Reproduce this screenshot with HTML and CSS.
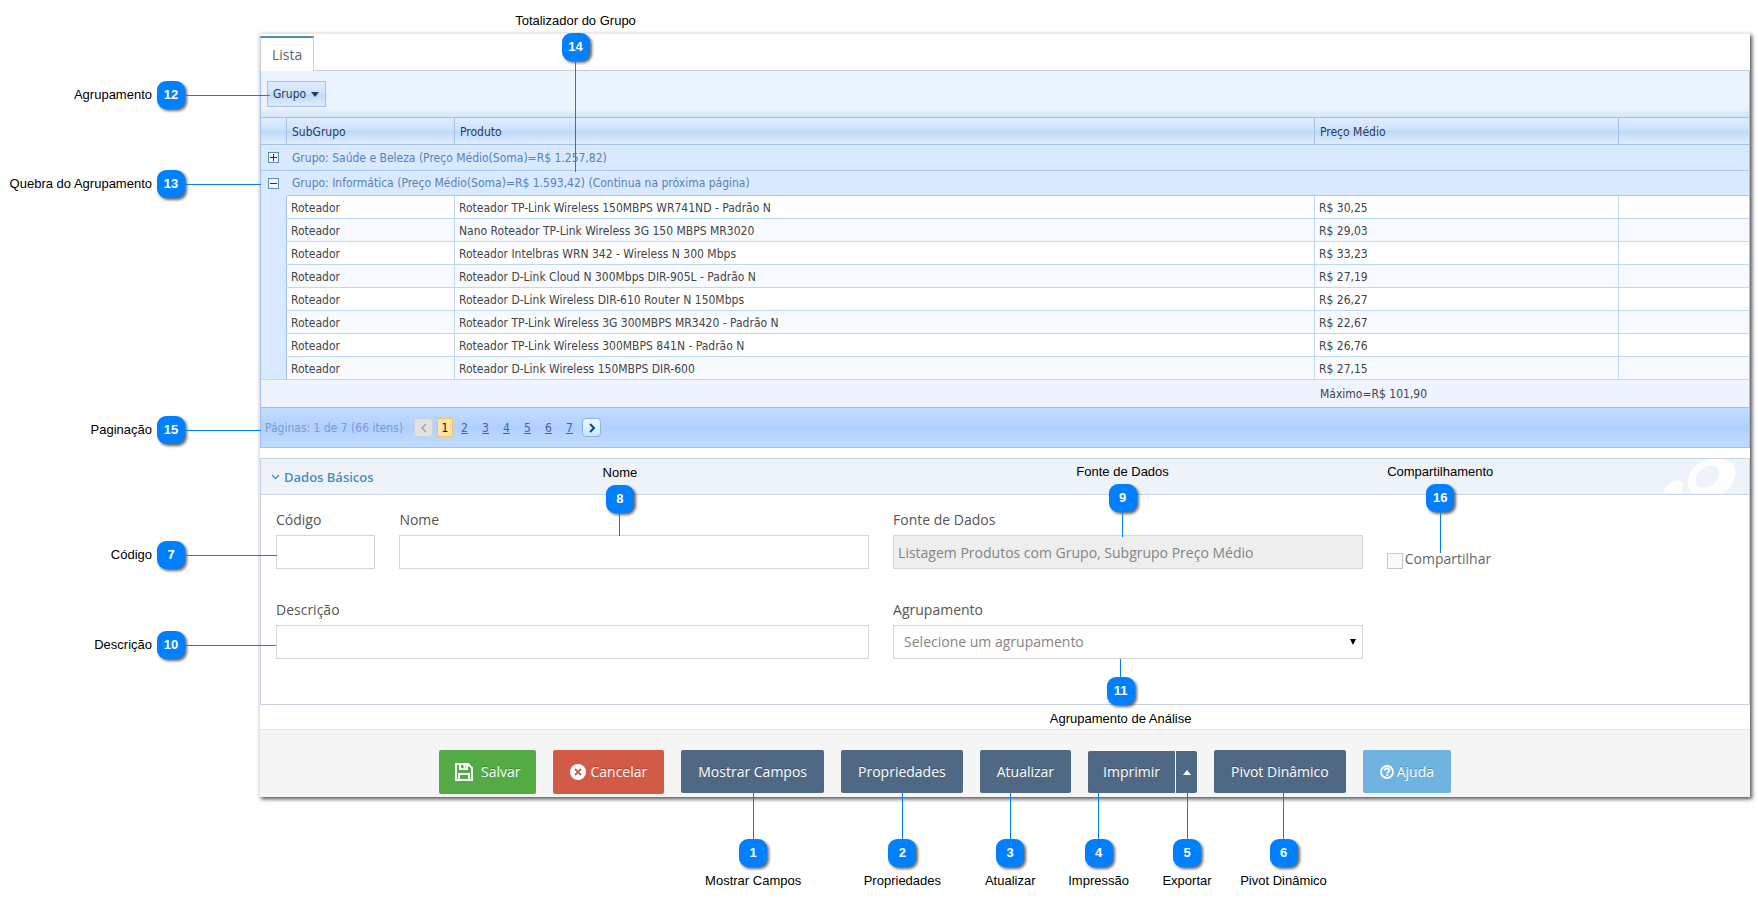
FILE: index.html
```html
<!DOCTYPE html>
<html lang="pt-BR">
<head>
<meta charset="utf-8">
<title>Análise de Dados</title>
<meta name="viewport" content="width=device-width, initial-scale=1">
<link rel="stylesheet" href="styles.css">
</head>
<body>
<main class="window">
  <div class="tabs">
    <button class="tab" type="button">Lista</button>
    <div class="callout callout-above c14"><span class="callout-label">Totalizador do Grupo</span><b class="badge">14</b><i class="lead"></i></div>
  </div>

  <section class="grid">
    <div class="group-panel">
      <div class="spot">
        <button class="group-button" type="button">Grupo
          <svg width="8" height="5" viewBox="0 0 8 5" aria-hidden="true"><path d="M0 0h8L4 5z" fill="#283b56"/></svg>
        </button>
        <div class="callout callout-left c12"><span class="callout-label">Agrupamento</span><b class="badge">12</b><i class="lead"></i></div>
      </div>
    </div>

    <table class="data">
      <colgroup><col class="col-indent"><col class="col-sub"><col><col class="col-price"><col class="col-rest"></colgroup>
      <thead>
        <tr><th></th><th>SubGrupo</th><th>Produto</th><th>Preço Médio</th><th></th></tr>
      </thead>
      <tbody>
        <tr class="group">
          <td><button class="toggle" type="button" aria-label="Expandir"><svg width="7" height="7" viewBox="0 0 7 7"><path d="M0 3h7v1H0zM3 0h1v7H3z" fill="#1f3350"/></svg></button></td>
          <td colspan="4">Grupo: Saúde e Beleza (Preço Médio(Soma)=R$ 1.257,82)</td>
        </tr>
        <tr class="group">
          <td class="spot"><button class="toggle" type="button" aria-label="Recolher"><svg width="7" height="7" viewBox="0 0 7 7"><path d="M0 3h7v1H0z" fill="#1f3350"/></svg></button>
            <div class="callout callout-left c13"><span class="callout-label">Quebra do Agrupamento</span><b class="badge">13</b><i class="lead"></i></div></td>
          <td colspan="4">Grupo: Informática (Preço Médio(Soma)=R$ 1.593,42) (Continua na próxima página)</td>
        </tr>
        <tr class="item"><td></td><td>Roteador</td><td>Roteador TP-Link Wireless 150MBPS WR741ND - Padrão N</td><td>R$ 30,25</td><td></td></tr>
        <tr class="item alt"><td></td><td>Roteador</td><td>Nano Roteador TP-Link Wireless 3G 150 MBPS MR3020</td><td>R$ 29,03</td><td></td></tr>
        <tr class="item"><td></td><td>Roteador</td><td>Roteador Intelbras WRN 342 - Wireless N 300 Mbps</td><td>R$ 33,23</td><td></td></tr>
        <tr class="item alt"><td></td><td>Roteador</td><td>Roteador D-Link Cloud N 300Mbps DIR-905L - Padrão N</td><td>R$ 27,19</td><td></td></tr>
        <tr class="item"><td></td><td>Roteador</td><td>Roteador D-Link Wireless DIR-610 Router N 150Mbps</td><td>R$ 26,27</td><td></td></tr>
        <tr class="item alt"><td></td><td>Roteador</td><td>Roteador TP-Link Wireless 3G 300MBPS MR3420 - Padrão N</td><td>R$ 22,67</td><td></td></tr>
        <tr class="item"><td></td><td>Roteador</td><td>Roteador TP-Link Wireless 300MBPS 841N - Padrão N</td><td>R$ 26,76</td><td></td></tr>
        <tr class="item alt"><td></td><td>Roteador</td><td>Roteador D-Link Wireless 150MBPS DIR-600</td><td>R$ 27,15</td><td></td></tr>
      </tbody>
      <tfoot>
        <tr><td colspan="3"></td><td>Máximo=R$ 101,90</td><td></td></tr>
      </tfoot>
    </table>

    <nav class="pager spot" aria-label="Paginação">
      <span class="pager-summary">Páginas: 1 de 7 (66 itens)</span>
      <button class="pager-step" type="button" disabled aria-label="Anterior"><svg width="6" height="10" viewBox="0 0 6 10"><path d="M5 1L1 5l4 4" fill="none" stroke="#a5a5a5" stroke-width="1.5"/></svg></button>
      <span class="pager-current">1</span>
      <a href="#p2">2</a><a href="#p3">3</a><a href="#p4">4</a><a href="#p5">5</a><a href="#p6">6</a><a href="#p7">7</a>
      <button class="pager-step" type="button" aria-label="Próxima"><svg width="6" height="10" viewBox="0 0 6 10"><path d="M1 1l4 4-4 4" fill="none" stroke="#0d4f7c" stroke-width="2"/></svg></button>
      <div class="callout callout-left c15"><span class="callout-label">Paginação</span><b class="badge">15</b><i class="lead"></i></div>
    </nav>
  </section>

  <section class="panel">
    <header class="panel-head">
      <svg width="9" height="6" viewBox="0 0 9 6" aria-hidden="true"><path d="M1 1l3.500 3.500L8 1" fill="none" stroke="#478fb8" stroke-width="1.3"/></svg>
      <h2>Dados Básicos</h2>
      <svg class="panel-art" width="76" height="35" viewBox="0 0 76 34" aria-hidden="true">
        <path d="M0 34C2 27 8 21 15 21c5 0 6 4 5 8l-2 5z" fill="#fff"/>
        <path fill-rule="evenodd" d="M29 34C22 26 24 14 33 6 41-1 53-3 62 0c10 3 12 12 9 20-2 6-6 11-12 14zM40 28c8 1 15-6 16-13 1-5-2-9-8-9-7 0-13 6-15 12-1 6 1 10 7 10z" fill="#fff"/>
      </svg>
    </header>
    <form class="fields">
      <div class="field w1">
        <label for="codigo">Código</label>
        <div class="spot"><input id="codigo" type="text">
          <div class="callout callout-left c7"><span class="callout-label">Código</span><b class="badge">7</b><i class="lead"></i></div></div>
      </div>
      <div class="field w4">
        <label for="nome">Nome</label>
        <div class="spot"><input id="nome" type="text">
          <div class="callout callout-above c8"><span class="callout-label">Nome</span><b class="badge">8</b><i class="lead"></i></div></div>
      </div>
      <div class="field w4">
        <label for="fonte">Fonte de Dados</label>
        <div class="spot"><input id="fonte" type="text" disabled value="Listagem Produtos com Grupo, Subgrupo Preço Médio">
          <div class="callout callout-above c9"><span class="callout-label">Fonte de Dados</span><b class="badge">9</b><i class="lead"></i></div></div>
      </div>
      <div class="check spot w3">
        <input id="compartilhar" type="checkbox"><label for="compartilhar">Compartilhar</label>
        <div class="callout callout-above c16"><span class="callout-label">Compartilhamento</span><b class="badge">16</b><i class="lead"></i></div>
      </div>
      <div class="field w5">
        <label for="descricao">Descrição</label>
        <div class="spot"><input id="descricao" type="text">
          <div class="callout callout-left c10"><span class="callout-label">Descrição</span><b class="badge">10</b><i class="lead"></i></div></div>
      </div>
      <div class="field w4">
        <label for="agrupamento">Agrupamento</label>
        <div class="spot"><select id="agrupamento"><option>Selecione um agrupamento</option></select>
          <svg class="select-arrow" width="6" height="6" viewBox="0 0 6 6" aria-hidden="true"><path d="M0 0h6L3 6z"/></svg>
          <div class="callout callout-below c11"><i class="lead"></i><b class="badge">11</b><span class="callout-label">Agrupamento de Análise</span></div></div>
      </div>
    </form>
  </section>

  <footer class="actions">
    <button class="btn btn-save" type="button">
      <svg width="18" height="18" viewBox="0 0 18 18" aria-hidden="true"><path fill="none" stroke="#fff" stroke-width="2" d="M1 1h12l4 4v12H1zM4 17v-6h10v6M5 1v5h7V1"/><path fill="#fff" d="M8.500 1.500h2v4h-2z"/></svg>
      Salvar</button>
    <button class="btn btn-cancel" type="button">
      <svg width="16" height="16" viewBox="0 0 16 16" aria-hidden="true"><circle cx="8" cy="8" r="8" fill="#fff"/><path d="M5 5l6 6M11 5l-6 6" stroke="#d15b47" stroke-width="1.800"/></svg>
      Cancelar</button>
    <div class="spot">
      <button class="btn" type="button">Mostrar Campos</button>
      <div class="callout callout-below c1"><i class="lead"></i><b class="badge">1</b><span class="callout-label">Mostrar Campos</span></div>
    </div>
    <div class="spot">
      <button class="btn" type="button">Propriedades</button>
      <div class="callout callout-below c2"><i class="lead"></i><b class="badge">2</b><span class="callout-label">Propriedades</span></div>
    </div>
    <div class="spot">
      <button class="btn" type="button">Atualizar</button>
      <div class="callout callout-below c3"><i class="lead"></i><b class="badge">3</b><span class="callout-label">Atualizar</span></div>
    </div>
    <div class="split">
      <div class="spot">
        <button class="btn btn-main" type="button">Imprimir</button>
        <div class="callout callout-below c4"><i class="lead"></i><b class="badge">4</b><span class="callout-label">Impressão</span></div>
      </div>
      <div class="spot">
        <button class="btn btn-more" type="button" aria-label="Exportar"><svg width="8" height="5" viewBox="0 0 8 5"><path d="M0 5h8L4 0z" fill="#fff"/></svg></button>
        <div class="callout callout-below c5"><i class="lead"></i><b class="badge">5</b><span class="callout-label">Exportar</span></div>
      </div>
    </div>
    <div class="spot">
      <button class="btn" type="button">Pivot Dinâmico</button>
      <div class="callout callout-below c6"><i class="lead"></i><b class="badge">6</b><span class="callout-label">Pivot Dinâmico</span></div>
    </div>
    <button class="btn btn-help" type="button">
      <svg width="14" height="14" viewBox="0 0 14 14" aria-hidden="true"><circle cx="7" cy="7" r="6" fill="none" stroke="#fff" stroke-width="1.800"/><path d="M4.800 5.500c0-1.300 1-2 2.200-2s2.300.7 2.300 1.900c0 1.500-2 1.500-2 3" fill="none" stroke="#fff" stroke-width="1.800"/><path d="M6.300 9.200h2v1.700h-2z" fill="#fff"/></svg>
      Ajuda</button>
  </footer>
</main>
</body>
</html>
```
FILE: styles.css
```css
*, *::before, *::after { box-sizing: border-box; }

body {
  min-height: 100vh;
  margin: 0;
  padding: 33px 8px 100px 259px;
  background: #fff;
  color: #666;
  font: 14px/20px "Open Sans", sans-serif;
}

button, input, select { font: inherit; color: inherit; margin: 0; }

.spot { position: relative; }

.window {
  border-left: 1px solid #e4e4e4;
  border-top: 1px solid #e9e9e9;
  background: #fff;
  box-shadow: 2px 2px 4px rgba(0, 0, 0, .7);
}

/* Tabs */
.tabs {
  position: relative;
  display: flex;
  height: 37px;
  padding-top: 2px;
  border-bottom: 1px solid #c5d0dc;
}
.tab {
  height: 35px;
  padding: 0 11px;
  border: solid #c5d0dc;
  border-width: 2px 1px 0;
  border-top-color: #4c8fbd;
  background: #fff;
  color: #666;
}

/* Grid */
.grid {
  border: solid #a3c0e8;
  border-width: 0 1px 1px;
  color: #444;
  font: 12px/18px "DejaVu Sans Condensed", "DejaVu Sans", sans-serif;
}
.group-panel {
  display: flex;
  padding: 10px 6px;
  background: linear-gradient(#ebf3fe 80%, #d5e6f6);
}
.group-button {
  display: flex;
  align-items: center;
  gap: 5px;
  height: 26px;
  padding: 0 6px 0 5px;
  border: 1px solid #a3c0e8;
  background: linear-gradient(#e0edff, #cde1fd 49%, #bcd9fa 50%, #e0edff);
  color: #283b56;
}
.data { width: 100%; table-layout: fixed; border-collapse: separate; border-spacing: 0; }
.col-indent { width: 26px; }
.col-sub { width: 168px; }
.col-price { width: 304px; }
.col-rest { width: 130px; }
.data th {
  height: 28px;
  padding: 1px 5px 0;
  border: solid #a3c0e8;
  border-width: 1px 1px 1px 0;
  background: linear-gradient(#e0edff, #cde1fd 46%, #bcd9fa 50%, #e0edff);
  color: #283b56;
  font-weight: 400;
  text-align: left;
}
.data th:last-child, .data td:last-child { border-right: 0; }
.data td { padding: 1px 4px 0; }
.group td {
  height: 26px;
  padding: 0 5px;
  border-bottom: 1px solid #a9c9f3;
  background: #d9e9ff;
  color: #5384b4;
}
.group + .group td { height: 25px; }
.group + .group td:first-child { border-bottom-color: #d9e9ff; }
.toggle {
  display: grid;
  place-items: center;
  width: 11px;
  height: 11px;
  margin-left: 2px;
  padding: 0;
  border: 1px solid #5b8cc4;
  background: #f3f8ff;
}
.item td {
  height: 23px;
  border: solid #bcd7f7;
  border-width: 0 1px 1px 0;
  background: #fff;
}
.item.alt td { background: #f7fbff; }
.item td:first-child, .item.alt td:first-child {
  border-right-color: #a3c0e8;
  border-bottom-color: #d9e9ff;
  background: #d9e9ff;
}
.data tbody .item:last-child td { border-bottom-color: #bcd7f7; }
.data tfoot td { height: 28px; padding: 0 5px; border-bottom: 1px solid #a3c0e8; background: #eef3ff; }

.pager {
  display: flex;
  align-items: center;
  height: 39px;
  padding-left: 4px;
  background: linear-gradient(#c5dcff, #afd0ff 50%, #c2dcff);
  color: #7a9bcf;
}
.pager-summary { margin-right: 11px; }
.pager-step {
  display: grid;
  place-items: center;
  width: 19px;
  height: 19px;
  padding: 0;
  border: 1px solid #85b7e0;
  border-radius: 4px;
  background: linear-gradient(#eef8ff, #c9e6fc);
}
.pager-step:disabled { border-color: #ccd2da; background: #e2e2e2; }
.pager-current {
  width: 16px;
  height: 19px;
  margin: 0 1px 0 4px;
  border: 1px solid #f9bd68;
  background: #ffe6a0;
  color: #111;
  text-align: center;
}
.pager a { width: 21px; color: #3f64a6; text-align: center; }
.pager a + button { margin-left: 2px; }

/* Panel with the form */
.panel { margin-top: 10px; border: 1px solid #c8d4e3; }
.panel-head {
  display: flex;
  align-items: center;
  gap: 4px;
  height: 36px;
  padding-left: 10px;
  border-bottom: 1px solid #c8d4e3;
  background: #eef3fa;
}
.panel-head h2 { margin: 0; color: #478fb8; font-size: 13px; font-weight: 600; }
.panel-art { margin: 0 10px 0 auto; }
.fields {
  display: grid;
  grid-template-columns: repeat(12, minmax(0, 1fr));
  gap: 31px 24px;
  padding: 15px 16px 45px 15px;
}
.w1 { grid-column: span 1; }
.w3 { grid-column: span 3; }
.w4 { grid-column: span 4; }
.w5 { grid-column: span 5; }
.field { display: flex; flex-direction: column; gap: 5px; }
.field label { color: #555; font-weight: 500; }
.field input, .field select {
  display: block;
  width: 100%;
  height: 34px;
  padding: 0 4px;
  border: 1px solid #d5d5d5;
  border-radius: 0;
  background: #fff;
  color: #858585;
}
.field select { padding: 0 10px; appearance: none; }
.field input:disabled { background: #eee; color: #848484; }
.select-arrow { position: absolute; right: 7px; top: 14px; }
.check { display: flex; align-items: flex-end; gap: 2px; }
.check input {
  appearance: none;
  width: 16px;
  height: 16px;
  border: 1px solid #c8c8c8;
  background: #fafafa;
}

/* Action bar */
.actions {
  display: flex;
  justify-content: center;
  align-items: flex-start;
  gap: 17px;
  margin-top: 24px;
  padding: 20px 120px 3px 0;
  border-top: 1px solid #e5e5e5;
  background: #f5f5f5;
}
.btn {
  display: flex;
  align-items: center;
  justify-content: center;
  height: 43px;
  padding: 0 17px;
  border: 0;
  border-radius: 2px;
  background: #4f6984;
  color: #fff;
  text-shadow: 0 -1px 0 rgba(0, 0, 0, .25);
}
.btn-save { height: 44px; gap: 8px; padding: 0 16px; background: #54aa45; }
.btn-cancel { height: 44px; gap: 4px; background: #d15b47; }
.btn-help { gap: 3px; background: #6fb3e0; }
.split { display: flex; gap: 1px; padding-top: 1px; }
.split .btn { height: 42px; }
.btn-main { padding: 0 15px; border-radius: 2px 0 0 2px; }
.btn-more { width: 21px; padding: 0; border-radius: 0 2px 2px 0; }

/* Numbered callouts laid over the interface */
.callout {
  position: absolute;
  z-index: 2;
  display: flex;
  align-items: center;
  color: #000;
  font: 13px/18px "Liberation Sans", Arial, sans-serif;
  white-space: nowrap;
  pointer-events: none;
}
.callout-above, .callout-below {
  flex-direction: column;
  width: 161px;
  margin-left: -80px;
}
.callout-below { top: 100%; }
.badge {
  width: 28px;
  height: 28px;
  border-radius: 9px;
  background: #0080ff;
  box-shadow: 2px 2px 3px rgba(0, 0, 0, .6);
  color: #fff;
  line-height: 28px;
  text-align: center;
}
.lead { width: 1px; height: 1px; background: #0080ff; }
.callout-above .badge { margin-top: 3px; }
.callout-below .badge { margin-bottom: 5px; }
.callout-left .badge { margin-left: 5px; }
.actions .lead { height: 46px; }

.c1, .c2 { left: 50%; }
.c3 { left: 30px; }
.c4 { left: 10px; }
.c5 { left: 50%; }
.c6 { left: 69px; }
.c7 { top: 6px; right: calc(100% - 1px); }
.c8 { bottom: calc(100% - 1px); left: 220px; }
.c9 { bottom: calc(100% - 2px); left: 229px; }
.c10 { top: 6px; right: 100%; }
.c11 { left: 227px; }
.c12 { top: 0; right: calc(100% - 3px); }
.c13 { top: -1px; right: 100%; }
.c14 { top: -22px; left: 315px; }
.c15 { top: 8px; right: 100%; }
.c16 { bottom: 16px; left: 53px; }
.c7 .lead { width: 92px; }
.c8 .lead { height: 23px; }
.c9 .lead { height: 25px; }
.c10 .lead { width: 91px; }
.c11 .lead { height: 18px; }
.c12 .lead { width: 85px; }
.c13 .lead, .c15 .lead { width: 76px; }
.c14 .lead { height: 111px; }
.c16 .lead { height: 41px; }
```
